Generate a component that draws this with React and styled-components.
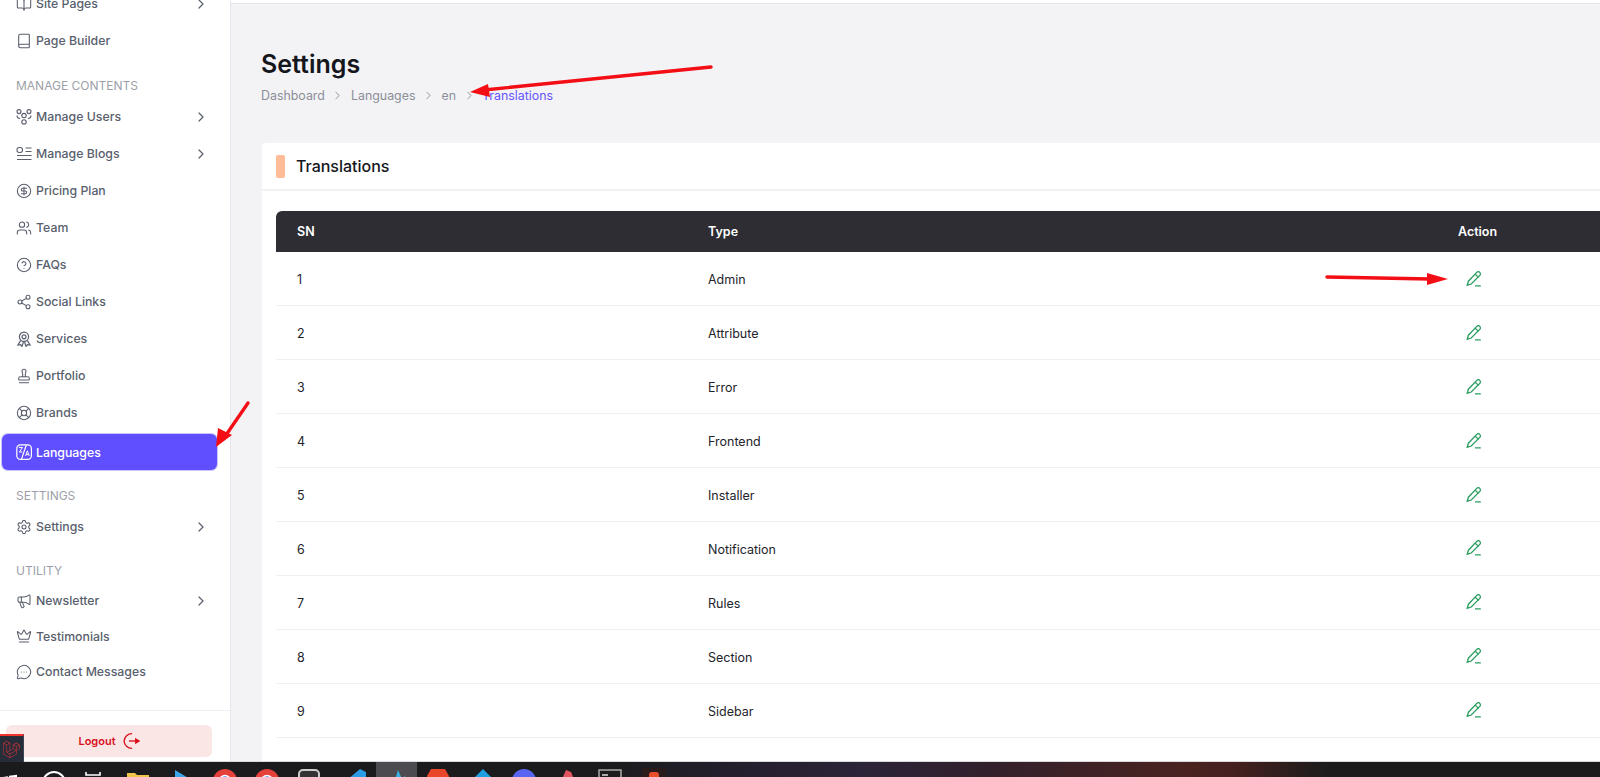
import React from "react";
import styled, { createGlobalStyle } from "styled-components";
import {
  BookOpen,
  Book,
  CircleDollarSign,
  Users,
  CircleHelp,
  Share2,
  Stamp,
  LifeBuoy,
  Settings,
  Megaphone,
  Crown,
  MessageCircleMore,
  ChevronRight,
} from "lucide-react";
import { SiLaravel } from "react-icons/si";

const GlobalStyle = createGlobalStyle`
  html, body {
    margin: 0;
    padding: 0;
    height: 100%;
    overflow: hidden;
    background: #f3f3f6;
    font-family: Inter, "Liberation Sans", sans-serif;
  }
  * { box-sizing: border-box; }
`;

// little custom icons that lucide doesn't have
const PeopleIcon = () => (
  <svg width="16" height="16" viewBox="0 0 16 16" fill="none" stroke="currentColor" strokeWidth="1.1">
    <circle cx="3" cy="2.6" r="2" />
    <circle cx="13" cy="2.6" r="2" />
    <circle cx="8" cy="6.6" r="2.2" />
    <circle cx="8" cy="12.9" r="2.2" />
    <path d="M1 6.5c0 2 1.6 3 3.2 3M15 6.5c0 2-1.6 3-3.2 3" />
  </svg>
);

const BlogIcon = () => (
  <svg width="16" height="16" viewBox="0 0 16 16" fill="none" stroke="currentColor" strokeWidth="1.1">
    <rect x="1" y="1.5" width="5.5" height="5" rx="2.2" />
    <path d="M9.5 2h6M9.5 5.5h6M1 9.5h14.5M1 13.5h14.5" />
  </svg>
);

const AwardIcon = () => (
  <svg width="16" height="16" viewBox="0 0 16 16" fill="none" stroke="currentColor" strokeWidth="1.2">
    <circle cx="8" cy="5.8" r="4.6" />
    <circle cx="8" cy="5.8" r="2" />
    <path d="M4.6 9.6L2 14l2.6-.4L6 15.4l1.4-4.4M11.4 9.6L14 14l-2.6-.4L10 15.4l-1.4-4.4" />
  </svg>
);

const TranslateIcon = () => (
  <svg width="16" height="16" viewBox="0 0 16 16" fill="none" stroke="currentColor" strokeWidth="1.2">
    <rect x="0.8" y="0.8" width="14.6" height="14.6" rx="3.6" />
    <path d="M5.4 15.4L10.4.8" />
    <path d="M2.8 3.4h3.8L3.4 8h3M11.4 6.8l-1.8 5.2M11.4 6.8l1.8 5.2M10.2 10.4h2.4" strokeWidth="1" />
  </svg>
);

const LogoutIcon = () => (
  <svg width="18" height="18" viewBox="0 0 17 17" fill="none" stroke="currentColor" strokeWidth="1.3">
    <path d="M9.5 1.6A7.2 7.2 0 0 0 2 8.5a7.2 7.2 0 0 0 7.5 7" />
    <path d="M6.6 8.5h9.2" />
    <path d="M13 6.6l3 1.9-3 1.9z" fill="currentColor" />
  </svg>
);

const EditIcon = () => (
  <svg width="16" height="16" viewBox="0 0 16 16" fill="none" stroke="currentColor" strokeWidth="1.3">
    <path d="M10.8 1.4c.8-.8 2.2-.8 3 0s.8 2.2 0 3L5.2 13l-4 1.2 1.2-4z" />
    <path d="M9.2 3.2l3.4 3.2M9 14.9h5.8" />
  </svg>
);

const lucide = { size: 18, strokeWidth: 1.6 };

const NAV_TOP = [
  { label: "Site Pages", icon: <BookOpen {...lucide} />, more: true },
  { label: "Page Builder", icon: <Book {...lucide} /> },
];

const NAV_CONTENTS = [
  { label: "Manage Users", icon: <PeopleIcon />, more: true },
  { label: "Manage Blogs", icon: <BlogIcon />, more: true },
  { label: "Pricing Plan", icon: <CircleDollarSign {...lucide} /> },
  { label: "Team", icon: <Users {...lucide} /> },
  { label: "FAQs", icon: <CircleHelp {...lucide} /> },
  { label: "Social Links", icon: <Share2 {...lucide} /> },
  { label: "Services", icon: <AwardIcon /> },
  { label: "Portfolio", icon: <Stamp {...lucide} /> },
  { label: "Brands", icon: <LifeBuoy {...lucide} /> },
  { label: "Languages", icon: <TranslateIcon />, active: true },
];

const NAV_UTILITY = [
  { label: "Newsletter", icon: <Megaphone {...lucide} />, more: true, tight: true },
  { label: "Testimonials", icon: <Crown {...lucide} />, tight: true },
  { label: "Contact Messages", icon: <MessageCircleMore {...lucide} />, tight: true },
];

const ROWS = ["Admin", "Attribute", "Error", "Frontend", "Installer", "Notification", "Rules", "Section", "Sidebar"];

const Screen = styled.div`
  display: flex;
  flex-direction: column;
  height: 777px;
  width: 1600px;
  overflow: hidden;
  position: relative;
`;

const Body = styled.div`
  display: flex;
  height: 762px;
  flex: none;
  overflow: hidden;
  border-bottom: 1px solid #d9d9de;
`;

const Sidebar = styled.aside`
  width: 231px;
  flex: none;
  display: flex;
  flex-direction: column;
  background: #fff;
  border-right: 1px solid #e6e6ec;
`;

const Nav = styled.nav`
  flex: 1;
  overflow: hidden;
  margin-top: -15px;
`;

const SectionLabel = styled.div`
  height: 14px;
  line-height: 14px;
  margin: ${(p) => p.$top}px 0 ${(p) => p.$bottom}px 16px;
  font-size: 12px;
  color: #9c9fa9;
  text-transform: uppercase;
`;

const NavItem = styled.a`
  display: flex;
  align-items: center;
  height: ${(p) => (p.$active ? "36px" : p.$tight ? "35.5px" : "37px")};
  margin: ${(p) => (p.$active ? "3px 0 0 2px" : "0")};
  width: ${(p) => (p.$active ? "215px" : "100%")};
  padding: 0 21px 0 ${(p) => (p.$active ? 14 : 16)}px;
  gap: 4px;
  font-size: 12.3px;
  font-weight: 500;
  color: ${(p) => (p.$active ? "#fff" : "#5a5f6e")};
  background: ${(p) => (p.$active ? "#604fff" : "transparent")};
  border-radius: 6px;
  box-shadow: ${(p) => (p.$active ? "0 0 0 1px #c9c4fb" : "none")};
`;

const NavLabel = styled.span`
  flex: 1;
  white-space: nowrap;
`;

const IconSlot = styled.span`
  display: inline-flex;
  align-items: center;
  justify-content: center;
  width: 16px;
  height: 16px;
  flex: none;
`;

const SidebarFoot = styled.div`
  height: 51px;
  flex: none;
  border-top: 1px solid #efeff3;
  padding: 14px 18px 0 6px;
`;

const LogoutButton = styled.button`
  display: flex;
  align-items: center;
  justify-content: center;
  gap: 6px;
  width: 100%;
  height: 32px;
  border: none;
  border-radius: 6px;
  padding: 0;
  font-family: inherit;
  font-size: 11px;
  font-weight: 600;
  color: #d8121f;
  background: #fbe6e6;
`;

const LaravelBadge = styled.div`
  position: absolute;
  left: 0;
  top: 734px;
  width: 24px;
  height: 28px;
  display: flex;
  align-items: center;
  justify-content: center;
  background: #262c38;
  border-top: 2px solid #f0312c;
  border-right: 1px solid #3d4350;
  color: #d9343a;
`;

const Main = styled.main`
  flex: 1;
  min-width: 0;
  background: #f3f3f6;
`;

const TopEdge = styled.div`
  height: 4px;
  background: #fff;
  border-bottom: 1px solid #e6e6ec;
`;

const Content = styled.div`
  padding: 45px 0 0 31px;
`;

const PageTitle = styled.h1`
  margin: 0 0 0 -1px;
  height: 30px;
  line-height: 30px;
  font-size: 25px;
  font-weight: 600;
  color: #15161c;
`;

const Crumbs = styled.div`
  display: flex;
  align-items: center;
  gap: 6.5px;
  margin: 8px 0 0 -1px;
  height: 16px;
  font-size: 12.4px;
  color: #8c8e98;
`;

const Crumb = styled.span`
  color: ${(p) => (p.$current ? "#6555ff" : "#8c8e98")};
`;

const Card = styled.section`
  width: 1400px;
  height: 619px;
  margin-top: 40px;
  background: #fff;
  border-radius: 4px 0 0 0;
`;

const CardHead = styled.header`
  display: flex;
  align-items: center;
  gap: 11px;
  height: 48px;
  padding-left: 14px;
  border-bottom: 2px solid #f1f1f4;
`;

const Accent = styled.span`
  width: 9px;
  height: 23px;
  border-radius: 2px;
  background: #ffbc97;
`;

const CardTitle = styled.h2`
  margin: 0;
  font-size: 16px;
  font-weight: 500;
  color: #15161c;
`;

const CardBody = styled.div`
  padding: 20px 0 0 14px;
`;

const Table = styled.table`
  width: 1386px;
  table-layout: fixed;
  border-collapse: collapse;
  font-size: 12.5px;
`;

const HeadRow = styled.tr`
  height: 41px;
  background: #2d2d33;
`;

const Th = styled.th`
  width: ${(p) => p.$w}px;
  padding: 0 0 0 21px;
  text-align: left;
  font-size: 12.5px;
  font-weight: 600;
  color: #fff;
  &:first-child { border-top-left-radius: 6px; }
`;

const Row = styled.tr`
  height: 53.9px;
  border-bottom: 1px solid #f0f0f2;
`;

const Td = styled.td`
  padding: 2px 0 0 21px;
  font-weight: 400;
  color: #23242b;
`;

const EditLink = styled.a`
  display: inline-flex;
  margin: 1px 0 0 8px;
  color: #2a9d5f;
`;

const Annotations = styled.svg`
  position: absolute;
  inset: 0;
  pointer-events: none;
`;

const Taskbar = styled.footer`
  flex: none;
  height: 15px;
  overflow: hidden;
  display: flex;
  background: linear-gradient(90deg, #1b1b1d 0, #1b1b1d 38%, #241f2d 46%, #2c2438 54%, #33202c 62%, #4a2320 74%, #45201f 77%, #1c1c1c 83%);
`;

const TaskCell = styled.div`
  width: ${(p) => p.$w || 26}px;
  margin-left: ${(p) => p.$gap}px;
  height: 15px;
  flex: none;
  display: flex;
  justify-content: center;
  padding-top: ${(p) => p.$top}px;
  background: ${(p) => (p.$active ? "#4c4c50" : "transparent")};
`;

const Chrome = () => (
  <>
    <circle cx="13" cy="13" r="12" fill="#e5413a" />
    <path d="M3 19a12 12 0 0 1-1-9l8 7z" fill="#3aa757" />
    <path d="M24 9a12 12 0 0 1 0 9l-8-3z" fill="#fbc02d" />
    <circle cx="13" cy="13" r="5.5" fill="#4a8cf0" stroke="#fff" strokeWidth="1.5" />
  </>
);

const TASK_ICONS = [
  { gap: -3, top: 10, art: <path d="M6 5l5-.7V12H6zM12 3.8l8-1V12h-8z" fill="#fff" /> },
  { gap: 18, top: 8, art: <circle cx="13" cy="13" r="11" fill="none" stroke="#fff" strokeWidth="2" /> },
  { gap: 13, top: 9, art: <path d="M6 1v3h14V1" fill="none" stroke="#fff" strokeWidth="1.6" /> },
  { gap: 19, top: 8, art: <path d="M2 3h8l2 2h12v19H2z" fill="#f1c54a" /> },
  { gap: 20, top: 7, art: <path d="M4 1l20 12L4 25z" fill="#3aa6e8" /> },
  { gap: 15, top: 6, art: <Chrome /> },
  { gap: 16, top: 6, art: <Chrome /> },
  { gap: 16, top: 7, art: <rect x="3" y="1" width="20" height="22" rx="4" fill="#333" stroke="#ccc" strokeWidth="2" /> },
  { gap: 20, top: 6, art: <path d="M18 1l6 3v18l-6 3L5 14l-3 3V9l3 3z" fill="#2a9be6" /> },
  { gap: 8, w: 41, top: 7, active: true, art: <path d="M3 18l5-10 3 3 3-10 4 9 3-3 3 11z" fill="#34b4e6" /> },
  { gap: 8, top: 6, art: <path d="M6 1h14l4 7-3 14-8 3-8-3L2 8z" fill="#e8452a" /> },
  { gap: 19, top: 6, art: <path d="M13 1l11 11-11 12L2 12z" fill="#1f9fe0" /> },
  { gap: 15, top: 6, art: <ellipse cx="13" cy="13" rx="12" ry="12" fill="#5865f2" /> },
  { gap: 17, top: 7, art: <path d="M12 1l5 2 6 14H5z" fill="#e2545e" /> },
  { gap: 17, top: 7, art: <><rect x="2" y="1" width="22" height="20" fill="#1c1c1c" stroke="#aaa" strokeWidth="1.5" /><path d="M5 6h6" stroke="#ddd" strokeWidth="1.5" /></> },
  { gap: 18, top: 5, art: <><rect x="1" y="1" width="24" height="24" rx="3" fill="#2a1a1a" /><rect x="8" y="5" width="10" height="14" rx="3" fill="#e84d2c" /></> },
];

const Item = ({ label, icon, more, active, tight }) => (
  <NavItem $active={active} $tight={tight}>
    <IconSlot>{icon}</IconSlot>
    <NavLabel>{label}</NavLabel>
    {more && <ChevronRight size={16} strokeWidth={1.8} />}
  </NavItem>
);

const Arrow = ({ line, head }) => (
  <g>
    <path d={line} stroke="#f30d14" strokeWidth="3.4" strokeLinecap="round" fill="none" />
    <polygon points={head} fill="#f30d14" />
  </g>
);

export default function App() {
  return (
    <Screen>
      <GlobalStyle />
      <Body>
        <Sidebar>
          <Nav>
            {NAV_TOP.map((n) => (
              <Item key={n.label} {...n} />
            ))}
            <SectionLabel $top={20} $bottom={5}>Manage Contents</SectionLabel>
            {NAV_CONTENTS.map((n) => (
              <Item key={n.label} {...n} />
            ))}
            <SectionLabel $top={19} $bottom={5}>Settings</SectionLabel>
            <Item label="Settings" icon={<Settings {...lucide} />} more />
            <SectionLabel $top={19} $bottom={5}>Utility</SectionLabel>
            {NAV_UTILITY.map((n) => (
              <Item key={n.label} {...n} />
            ))}
          </Nav>
          <SidebarFoot>
            <LogoutButton>
              Logout
              <LogoutIcon />
            </LogoutButton>
          </SidebarFoot>
        </Sidebar>
        <Main>
          <TopEdge />
          <Content>
            <PageTitle>Settings</PageTitle>
            <Crumbs>
              <Crumb>Dashboard</Crumb>
              <ChevronRight size={13} strokeWidth={1.7} />
              <Crumb>Languages</Crumb>
              <ChevronRight size={13} strokeWidth={1.7} />
              <Crumb>en</Crumb>
              <ChevronRight size={13} strokeWidth={1.7} />
              <Crumb $current>Translations</Crumb>
            </Crumbs>
            <Card>
              <CardHead>
                <Accent />
                <CardTitle>Translations</CardTitle>
              </CardHead>
              <CardBody>
                <Table>
                  <thead>
                    <HeadRow>
                      <Th $w={411}>SN</Th>
                      <Th $w={750}>Type</Th>
                      <Th>Action</Th>
                    </HeadRow>
                  </thead>
                  <tbody>
                    {ROWS.map((type, i) => (
                      <Row key={type}>
                        <Td>{i + 1}</Td>
                        <Td>{type}</Td>
                        <Td>
                          <EditLink>
                            <EditIcon />
                          </EditLink>
                        </Td>
                      </Row>
                    ))}
                  </tbody>
                </Table>
              </CardBody>
            </Card>
          </Content>
        </Main>
      </Body>
      <Taskbar>
        {TASK_ICONS.map((t, i) => (
          <TaskCell key={i} $w={t.w} $gap={t.gap} $top={t.top} $active={t.active}>
            <svg width="26" height="26" viewBox="0 0 26 26" style={{ flex: "none" }}>
              {t.art}
            </svg>
          </TaskCell>
        ))}
      </Taskbar>
      <LaravelBadge>
        <SiLaravel size={17} />
      </LaravelBadge>
      {/* red arrows someone drew on the screenshot */}
      <Annotations width="1600" height="777">
        <Arrow line="M711 67L484 90" head="470,92 488,84 490,97" />
        <Arrow line="M248 403L226 435" head="216,447 218,428 232,435" />
        <Arrow line="M1327 277L1430 279" head="1448,279 1427,273 1427,285" />
      </Annotations>
    </Screen>
  );
}
